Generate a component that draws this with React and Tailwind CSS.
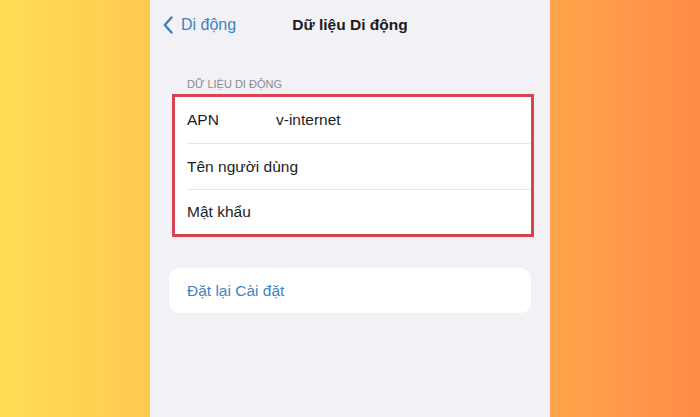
export default function App() {
  const font = { fontFamily: '"Liberation Sans", Arial, sans-serif' };
  return (
    <div className="flex w-[700px] h-[417px] overflow-hidden" style={font}>
      <div className="w-[150px] h-full bg-linear-to-r from-[#ffdd56] to-[#ffc951]" />
      <div className="w-[400px] h-full bg-[#f1f1f6] flex flex-col">
        <div className="h-[50px] grid grid-cols-[1fr_auto_1fr] items-center">
          <div className="flex items-center pl-[13px] gap-[8px] text-[#3d84c6] text-[16px]">
            <svg width="10" height="18" viewBox="0 0 10 18" fill="none">
              <path d="M8.5 1.5 L1.8 9 L8.5 16.5" stroke="#3a80c6" strokeWidth="2.4" strokeLinecap="round" strokeLinejoin="round" />
            </svg>
            <span>Di động</span>
          </div>
          <div className="text-[15.5px] font-semibold text-[#1c1c1e]">Dữ liệu Di động</div>
          <div />
        </div>
        <div className="mt-[28px] pl-[37px] text-[11px] leading-[12px] text-[#8b8b90] uppercase">Dữ liệu di động</div>
        <div className="mt-[4px] ml-[22px] w-[362px] bg-white border-[3px] border-[#d9434f] text-[15.5px] text-[#1c1c1e]">
          <div className="h-[46px] flex items-center pl-[12px]">
            <span className="w-[89px]">APN</span>
            <span>v-internet</span>
          </div>
          <div className="ml-[12px] border-t border-[#e6e6eb]" />
          <div className="h-[45px] flex items-center pl-[12px]">Tên người dùng</div>
          <div className="ml-[12px] border-t border-[#e6e6eb]" />
          <div className="h-[44px] flex items-center pl-[12px]">Mật khẩu</div>
        </div>
        <div className="mt-[31px] ml-[19px] w-[362px] h-[45px] rounded-[10px] bg-white flex items-center pl-[18px] text-[15.5px] text-[#3d84c6]">
          Đặt lại Cài đặt
        </div>
      </div>
      <div className="flex-1 h-full bg-linear-to-r from-[#ffa64b] to-[#ff8b48]" />
    </div>
  );
}
